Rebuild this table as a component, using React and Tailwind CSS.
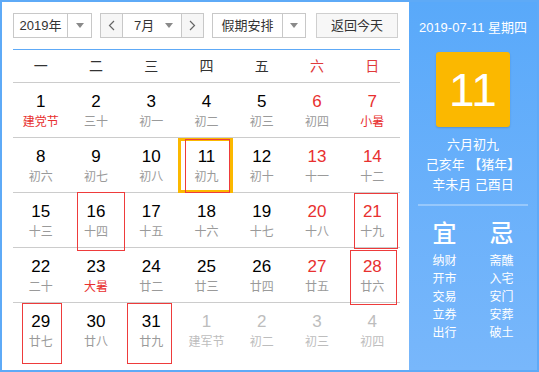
import React from "react";

const weeks = [
  [["1", "建党节", "fest"], ["2", "三十"], ["3", "初一"], ["4", "初二"], ["5", "初三"], ["6", "初四", "we"], ["7", "小暑", "we-fest"]],
  [["8", "初六"], ["9", "初七"], ["10", "初八"], ["11", "初九"], ["12", "初十"], ["13", "十一", "we"], ["14", "十二", "we"]],
  [["15", "十三"], ["16", "十四"], ["17", "十五"], ["18", "十六"], ["19", "十七"], ["20", "十八", "we"], ["21", "十九", "we"]],
  [["22", "二十"], ["23", "大暑", "fest"], ["24", "廿二"], ["25", "廿三"], ["26", "廿四"], ["27", "廿五", "we"], ["28", "廿六", "we"]],
  [["29", "廿七"], ["30", "廿八"], ["31", "廿九"], ["1", "建军节", "next"], ["2", "初二", "next"], ["3", "初三", "next"], ["4", "初四", "next"]],
];

const good = ["纳财", "开市", "交易", "立券", "出行"];
const bad = ["斋醮", "入宅", "安门", "安葬", "破土"];

function Arrow() {
  return <span className="w-0 h-0 border-l-[4px] border-r-[4px] border-t-[5px] border-l-transparent border-r-transparent border-t-[#8a8a8a]" />;
}

function Cell({ day }) {
  const [n, lunar, kind = ""] = day;
  const numColor = kind === "next" ? "text-[#bdbdbd]" : kind.includes("we") ? "text-[#e8302f]" : "text-black";
  const lunarColor = kind === "next" ? "text-[#bdbdbd]" : kind.includes("fest") ? "text-[#e8302f]" : "text-[#9a9a9a]";
  return (
    <div className="flex flex-col items-center pt-[9px] h-[54px]">
      <div className={`text-[17px] leading-[20px] ${numColor}`}>{n}</div>
      <div className={`text-[12px] leading-[20px] ${lunarColor}`}>{lunar}</div>
    </div>
  );
}

export default function App() {
  return (
    <div
      className="w-[539px] h-[372px] border-2 border-[#5eaaf7] flex bg-white overflow-hidden"
      style={{ fontFamily: '"Liberation Sans", "Noto Sans CJK SC", sans-serif' }}
    >
      {/* LEFT */}
      <div className="w-[407px] pl-[11px] pr-[9px] pt-[11px]">
        {/* controls */}
        <div className="flex h-[25px] text-[13px] text-[#333]">
          <div className="w-[79px] flex border border-[#c8c8c8]">
            <div className="flex-1 flex items-center justify-center">2019年</div>
            <div className="w-[24px] border-l border-[#c8c8c8] flex items-center justify-center">
              <Arrow />
            </div>
          </div>
          <div className="ml-[8px] w-[104px] flex border border-[#c8c8c8]">
            <div className="w-[22px] bg-[#f6f6f6] border-r border-[#c8c8c8] flex items-center justify-center text-[#666]">
              <svg width="7" height="11" viewBox="0 0 7 11"><path d="M6 1 L1.5 5.5 L6 10" fill="none" stroke="#666" strokeWidth="1.2" /></svg>
            </div>
            <div className="flex-1 flex items-center pl-[11px] pr-[8px] justify-between">
              <span>7月</span>
              <Arrow />
            </div>
            <div className="w-[22px] bg-[#f6f6f6] border-l border-[#c8c8c8] flex items-center justify-center">
              <svg width="7" height="11" viewBox="0 0 7 11"><path d="M1 1 L5.5 5.5 L1 10" fill="none" stroke="#666" strokeWidth="1.2" /></svg>
            </div>
          </div>
          <div className="ml-[8px] w-[94px] flex border border-[#c8c8c8]">
            <div className="flex-1 flex items-center justify-center">假期安排</div>
            <div className="w-[23px] border-l border-[#c8c8c8] flex items-center justify-center">
              <Arrow />
            </div>
          </div>
          <div className="ml-[10px] w-[82px] flex items-center justify-center border border-[#cfcfcf] bg-[#f7f7f7]">
            返回今天
          </div>
        </div>

        {/* header */}
        <div className="mt-[11px] border-t border-[#5eaaf7] border-b border-b-[#cccccc] grid grid-cols-7 h-[34px] items-center text-[14px] text-[#333]">
          {["一", "二", "三", "四", "五"].map((w) => (
            <div key={w} className="text-center">{w}</div>
          ))}
          <div className="text-center text-[#e03a3a]">六</div>
          <div className="text-center text-[#e03a3a]">日</div>
        </div>

        {/* weeks */}
        <div className="relative">
          {weeks.map((wk, i) => (
            <div key={i} className={`grid grid-cols-7 ${i < weeks.length - 1 ? "border-b border-[#cccccc]" : ""}`}>
              {wk.map((d, j) => (
                <Cell key={j} day={d} />
              ))}
            </div>
          ))}
          <div className="absolute left-[165px] top-[55px] w-[55px] h-[55px] border-[3px] border-[#fbb800]" />
          <div className="absolute left-[172px] top-[56px] w-[45px] h-[54px] border border-[#ee3b3b]" />
          <div className="absolute left-[64px] top-[109px] w-[48px] h-[59px] border border-[#ee3b3b]" />
          <div className="absolute left-[341px] top-[110px] w-[44px] h-[56px] border border-[#ee3b3b]" />
          <div className="absolute left-[337px] top-[167px] w-[47px] h-[55px] border border-[#ee3b3b]" />
          <div className="absolute left-[9px] top-[220px] w-[40px] h-[61px] border border-[#ee3b3b]" />
          <div className="absolute left-[114px] top-[220px] w-[45px] h-[61px] border border-[#ee3b3b]" />
        </div>
      </div>

      {/* RIGHT */}
      <div className="flex-1 bg-gradient-to-b from-[#59a9fa] to-[#78b7fb] flex flex-col items-center text-white">
        <div className="mt-[17px] text-[13px] leading-[18px]">2019-07-11 星期四</div>
        <div className="mt-[15px] w-[74px] h-[75px] rounded-[3px] bg-[#fbb800] flex items-center justify-center text-[46px] leading-none shadow-[0_1px_2px_rgba(0,0,0,0.15)]">
          11
        </div>
        <div className="mt-[8px] text-[13px] leading-[19px] text-center">
          <div>六月初九</div>
          <div className="mt-[1px]">己亥年 【猪年】</div>
          <div className="mt-[1px]">辛未月 己酉日</div>
        </div>
        <div className="mt-[10px] w-[110px] h-[2px] bg-white/30" />
        <div className="mt-[14px] flex gap-[33px]">
          <div className="flex flex-col items-center">
            <div className="text-[24px] leading-[28px] font-medium">宜</div>
            <div className="mt-[4px] text-[12px] leading-[18px] flex flex-col items-center">
              {good.map((t) => <div key={t}>{t}</div>)}
            </div>
          </div>
          <div className="flex flex-col items-center">
            <div className="text-[24px] leading-[28px] font-medium">忌</div>
            <div className="mt-[4px] text-[12px] leading-[18px] flex flex-col items-center">
              {bad.map((t) => <div key={t}>{t}</div>)}
            </div>
          </div>
        </div>
      </div>
    </div>
  );
}
